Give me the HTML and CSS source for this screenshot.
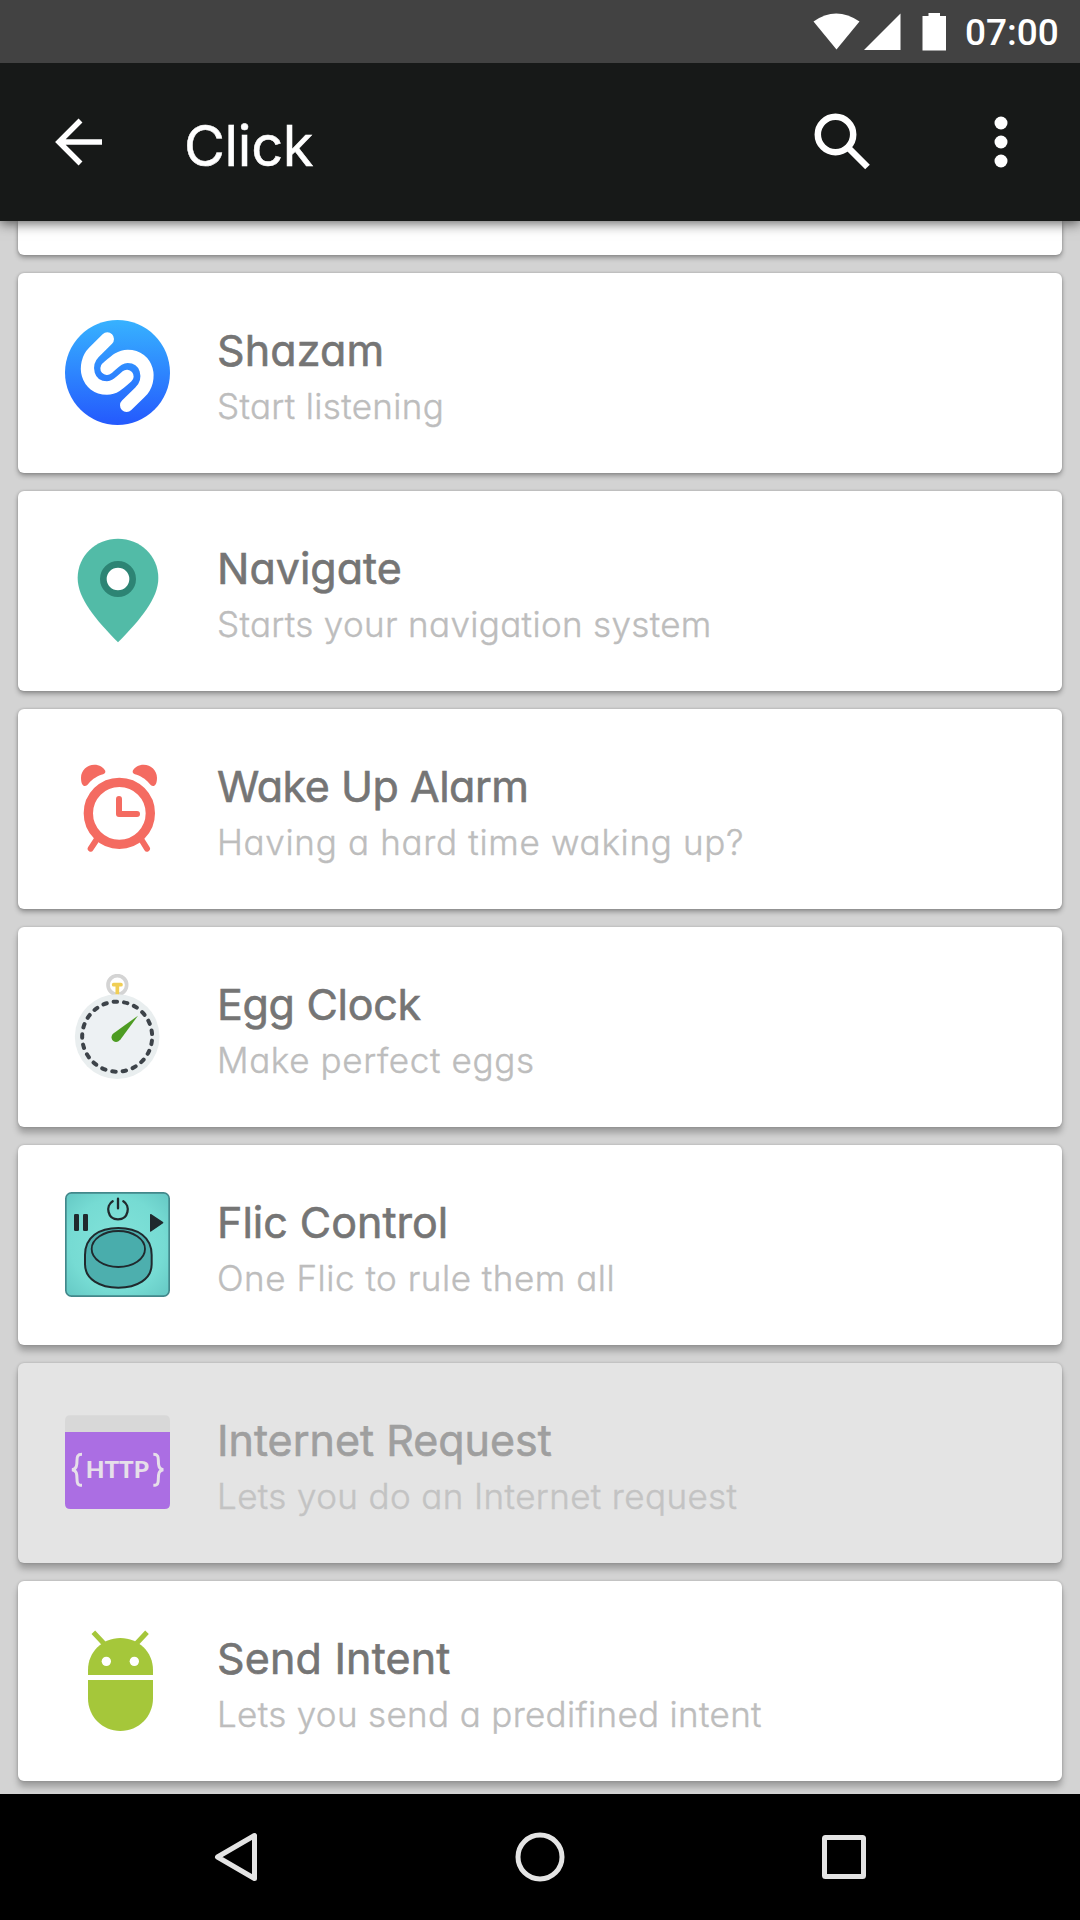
FILE: index.html
```html
<!DOCTYPE html>
<html lang="en">
<head>
<meta charset="utf-8">
<title>Click</title>
<link rel="stylesheet" href="styles.css">
</head>
<body>
<div class="screen">
  <div class="status">
    <svg class="signals" width="136" height="40" viewBox="0 0 136 40" fill="#fff">
      <path d="M0.500 8.500Q23 -7.500 46.500 8.500L23.500 36.500Z"/>
      <path d="M87.500 0.500V37H51Z"/>
      <path d="M109.500 3H115.500V0H127V3H133V37.500H109.500Z"/>
    </svg>
    <span class="time">07:00</span>
  </div>
  <header class="bar">
    <svg class="back" width="48" height="48" viewBox="0 0 48 48" fill="none" stroke="#fff" stroke-width="5.500"><path d="M25.500 2.500L4 24L25.500 45.500M4 24H47"/></svg>
    <h1 class="heading">Click</h1>
    <svg class="search" width="58" height="58" viewBox="0 0 58 58" fill="none" stroke="#fff"><circle cx="21.500" cy="21.500" r="17.700" stroke-width="6.500"/><path d="M35 35.500L53.500 54" stroke-width="6.500"/></svg>
    <svg class="more" width="14" height="52" viewBox="0 0 14 52" fill="#fff"><circle cx="7" cy="7" r="6.500"/><circle cx="7" cy="26" r="6.500"/><circle cx="7" cy="45" r="6.500"/></svg>
  </header>
  <main class="list">
    <section class="card stub"></section>
    <section class="card">
      <svg class="icon" viewBox="75 60 315 315">
        <defs><linearGradient id="sz" x1="0" y1="0" x2="0" y2="1"><stop offset="0" stop-color="#37b2ff"/><stop offset="1" stop-color="#2459fd"/></linearGradient></defs>
        <circle cx="232.500" cy="217.500" r="157.500" fill="url(#sz)"/>
        <path d="M202 117L162 157C126 193 140 264 201 264C222 264 234 253 261 229M260 316L300 277C338 240 323 169 263 169C240 169 226 183 201 205" fill="none" stroke="#fff" stroke-width="40" stroke-linecap="round" stroke-linejoin="round"/>
      </svg>
      <div class="text"><h2 class="title shazam">Shazam</h2><p class="sub">Start listening</p></div>
    </section>
    <section class="card">
      <svg class="icon" viewBox="75 84 315 315">
        <path d="M234 86C300 86 355 136 355 204C355 266 300 330 234 397C168 330 113 266 113 204C113 136 168 86 234 86Z" fill="#52bba7"/>
        <circle cx="234" cy="207" r="44" fill="#fff" stroke="#2d8474" stroke-width="20"/>
      </svg>
      <div class="text"><h2 class="title">Navigate</h2><p class="sub">Starts your navigation system</p></div>
    </section>
    <section class="card alarm">
      <svg class="icon" viewBox="75 78 315 315">
        <g fill="none" stroke="#f46b61" stroke-linecap="round" stroke-linejoin="round">
          <circle cx="238" cy="250" r="93" stroke-width="28"/>
          <path d="M237 207V252H291" stroke-width="18"/>
          <path d="M171 327L152 356M303 327L321 356" stroke-width="18"/>
        </g>
        <path d="M135 168C126 168 123 155 123 143C123 121 141 104 163 104C178 104 191 112 196 123C197 130 192 132 184 134C167 140 152 151 144 163C141 167 139 168 135 168Z" fill="#f46b61"/>
        <path d="M339 168C348 168 351 155 351 143C351 121 333 104 311 104C296 104 283 112 278 123C277 130 282 132 290 134C307 140 322 151 330 163C333 167 335 168 339 168Z" fill="#f46b61"/>
      </svg>
      <div class="text"><h2 class="title">Wake Up Alarm</h2><p class="sub">Having a hard time waking up?</p></div>
    </section>
    <section class="card egg">
      <svg class="icon" viewBox="75 72 315 315">
        <circle cx="232" cy="105" r="28" fill="#fff" stroke="#d4d4d4" stroke-width="11"/>
        <path d="M221 104H243M232 104V132" fill="none" stroke="#f0ce55" stroke-width="11" stroke-linecap="round"/>
        <circle cx="231.500" cy="260" r="127" fill="#e9eeef"/>
        <circle cx="231.500" cy="260" r="105" fill="#edf1f3" stroke="#3d4349" stroke-width="12" stroke-linecap="round" stroke-dasharray="10.500 20.914" stroke-dashoffset="-12"/>
        <path d="M294 197L242 268C236 276 227 278 220 273C213 267 213 257 219 251Z" fill="#4d9c22"/>
      </svg>
      <div class="text"><h2 class="title">Egg Clock</h2><p class="sub">Make perfect eggs</p></div>
    </section>
    <section class="card flic">
      <svg class="icon" viewBox="75 66 315 315">
        <defs><radialGradient id="fl" r=".7"><stop offset="0" stop-color="#82e3da"/><stop offset=".65" stop-color="#76dbd3"/><stop offset="1" stop-color="#65c8c4"/></radialGradient></defs>
        <rect x="77.500" y="68.500" width="310" height="310" rx="17" fill="url(#fl)" stroke="#43888b" stroke-width="5"/>
        <path d="M135 255C135 201 177 174 235 174C293 174 335 201 335 255V283C335 328 290 353 235 353C180 353 135 328 135 283Z" fill="#4dafae" stroke="#20292d" stroke-width="6"/>
        <ellipse cx="235" cy="237" rx="80" ry="54" fill="#49adac" stroke="#20292d" stroke-width="5.500"/>
        <path d="M218 94C196 107 202 148 234 148C266 148 272 107 250 94M234 86V115" fill="none" stroke="#20292d" stroke-width="7" stroke-linecap="round"/>
        <rect x="102" y="132" width="15" height="51" rx="4" fill="#20292d"/><rect x="129" y="132" width="15" height="51" rx="4" fill="#20292d"/>
        <path d="M332 134L368 158L332 183Z" fill="#20292d" stroke="#20292d" stroke-width="4" stroke-linejoin="round"/>
      </svg>
      <div class="text"><h2 class="title">Flic Control</h2><p class="sub">One Flic to rule them all</p></div>
    </section>
    <section class="card pressed">
      <svg class="icon" viewBox="75 60 315 315">
        <path d="M75 126V92Q75 76 91 76H374Q390 76 390 92V126Z" fill="#d8d8d8"/>
        <path d="M75 126H390V341Q390 357 374 357H91Q75 357 75 341Z" fill="#ab6ee3"/>
        <path d="M126 193C112 193 111 200 111 211C111 226 110 237 96 239C110 241 111 252 111 267C111 279 112 286 126 286M340 193C354 193 355 200 355 211C355 226 356 237 370 239C356 241 355 252 355 267C355 279 354 286 340 286" fill="none" stroke="#e6dfe9" stroke-width="9"/>
        <text class="http" x="137" y="264" textLength="190" lengthAdjust="spacingAndGlyphs">HTTP</text>
      </svg>
      <div class="text"><h2 class="title">Internet Request</h2><p class="sub">Lets you do an Internet request</p></div>
    </section>
    <section class="card intent">
      <svg class="icon" viewBox="75 54 315 315">
        <g fill="#a5c73a"><path d="M144 195V180C144 126 187 84 241 84C296 84 339 126 339 180V195Z"/><path d="M144 210H339V265C339 320 296 363 241 363C187 363 144 320 144 265Z"/></g>
        <path d="M160 67L193 102M321 67L288 102" stroke="#a5c73a" stroke-width="15"/>
        <circle cx="199" cy="154" r="14" fill="#fff"/><circle cx="283" cy="154" r="14" fill="#fff"/>
      </svg>
      <div class="text"><h2 class="title">Send Intent</h2><p class="sub">Lets you send a predifined intent</p></div>
    </section>
  </main>
  <nav class="nav">
    <svg width="50" height="56" viewBox="0 0 50 56"><path d="M43.500 6.500V49.500L6.500 28Z"/></svg>
    <svg width="56" height="56" viewBox="0 0 56 56"><circle cx="28" cy="28" r="22"/></svg>
    <svg width="50" height="56" viewBox="0 0 50 56"><rect x="5.500" y="8.500" width="39" height="39" rx="1"/></svg>
  </nav>
</div>
</body>
</html>
```
FILE: styles.css
```css
* { box-sizing: border-box; }
body { margin: 0; background: #d3d3d3; }
h1, h2, p { margin: 0; }
svg { display: block; flex: none; }
.screen {
  width: 1080px;
  height: 1920px;
  display: flex;
  flex-direction: column;
  overflow: hidden;
  font-family: Inter, "Open Sans", sans-serif;
  font-feature-settings: "cv11" 1;
}
.status {
  height: 63px;
  flex: none;
  display: flex;
  justify-content: flex-end;
  padding: 13px 21px 0 0;
  background: #424242;
  z-index: 2;
}
.time {
  margin-left: 16px;
  width: 94px;
  font: 500 37px/40px Roboto, sans-serif;
  color: #fff;
  white-space: nowrap;
}
.bar {
  height: 158px;
  flex: none;
  display: flex;
  align-items: flex-start;
  padding-left: 55px;
  background: #171918;
  box-shadow: 0 2px 12px rgba(0, 0, 0, .65);
  z-index: 1;
}
.back { margin-top: 55px; }
.heading {
  width: 630px;
  margin-left: 81px;
  padding-top: 49px;
  font-size: 56px;
  line-height: 68px;
  font-weight: 400;
  letter-spacing: -.3px;
  color: #fff;
  -webkit-text-stroke: .5px;
}
.search { margin-top: 50px; }
.more { margin: 53px 0 0 122px; }
.list {
  flex: 1;
  min-height: 0;
  overflow: hidden;
  display: flex;
  flex-direction: column;
  gap: 18px;
  padding: 0 18px;
}
.card {
  height: 200px;
  flex: none;
  display: flex;
  gap: 47px;
  padding: 47px 47px 0;
  background: #fff;
  border-radius: 6px;
  box-shadow: 0 3px 5px rgba(0, 0, 0, .3), 0 0 3px rgba(0, 0, 0, .2);
}
.stub { height: 34px; padding: 0; border-radius: 0 0 6px 6px; }
.card:nth-child(n+5) { box-shadow: 0 6px 6px rgba(0, 0, 0, .25), 0 0 3px rgba(0, 0, 0, .2); }
.pressed { background: #e4e4e4; }
.icon { width: 105px; height: 105px; }
.text { padding-top: 5px; white-space: nowrap; }
.title {
  font-size: 43px;
  line-height: 50px;
  font-weight: 400;
  color: #757575;
  -webkit-text-stroke: .6px;
}
.sub {
  margin-top: 10px;
  font-size: 35px;
  line-height: 42px;
  font-weight: 300;
  letter-spacing: .34px;
  color: #bdbdbd;
  -webkit-text-stroke: .4px;
}
.shazam { letter-spacing: .15px; }
.alarm .title { letter-spacing: -.47px; }
.alarm .sub { letter-spacing: .69px; }
.egg .title { letter-spacing: -.3px; }
.egg .sub { letter-spacing: .64px; }
.flic .sub { letter-spacing: .53px; }
.intent .title { letter-spacing: .18px; }
.pressed .title { color: #9f9f9f; }
.pressed .sub { color: #c3c3c3; letter-spacing: .39px; }
.http { font: 900 68px Lato, sans-serif; fill: #e6dfe9; }
.nav {
  height: 126px;
  flex: none;
  display: flex;
  align-items: flex-start;
  gap: 251px;
  padding: 35px 0 0 211px;
  background: #000;
}
.nav svg { fill: none; stroke: #e4e4e4; stroke-width: 5; stroke-linejoin: round; }
```
